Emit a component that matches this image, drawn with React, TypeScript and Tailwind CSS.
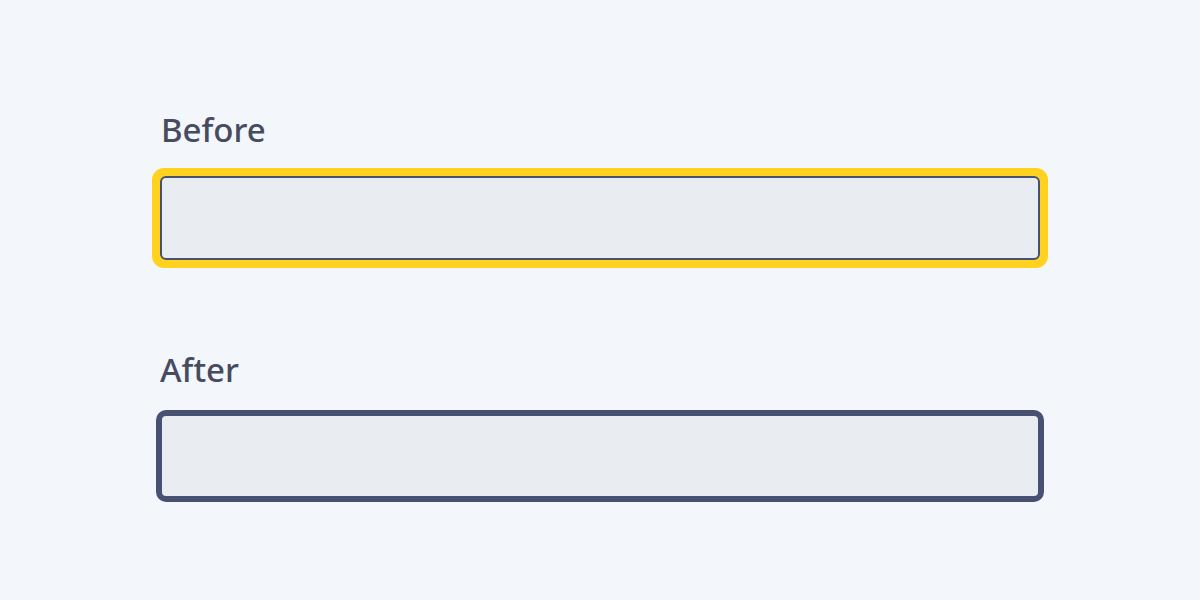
export default function App() {
  return (
    <div className="w-[1200px] h-[600px] bg-[#f3f6fb] flex flex-col items-center pt-[108px]" style={{ fontFamily: '"Noto Sans", sans-serif' }}>
      <div className="w-[888px] flex flex-col">
        <div className="text-[33px] font-medium text-[#474b60] leading-[44px] pl-[5px]">Before</div>
        <div className="mt-[16px] -mx-[4px] rounded-[12px] bg-[#ffd21f] p-[8px]">
          <div className="h-[84px] rounded-[6px] border-2 border-[#475273] bg-[#e9ecf0]" />
        </div>
        <div className="mt-[80px] text-[33px] font-medium text-[#474b60] leading-[44px] pl-[4px]">After</div>
        <div className="mt-[18px] h-[92px] rounded-[10px] border-[6px] border-[#475273] bg-[#e9ecf0]" />
      </div>
    </div>
  );
}
